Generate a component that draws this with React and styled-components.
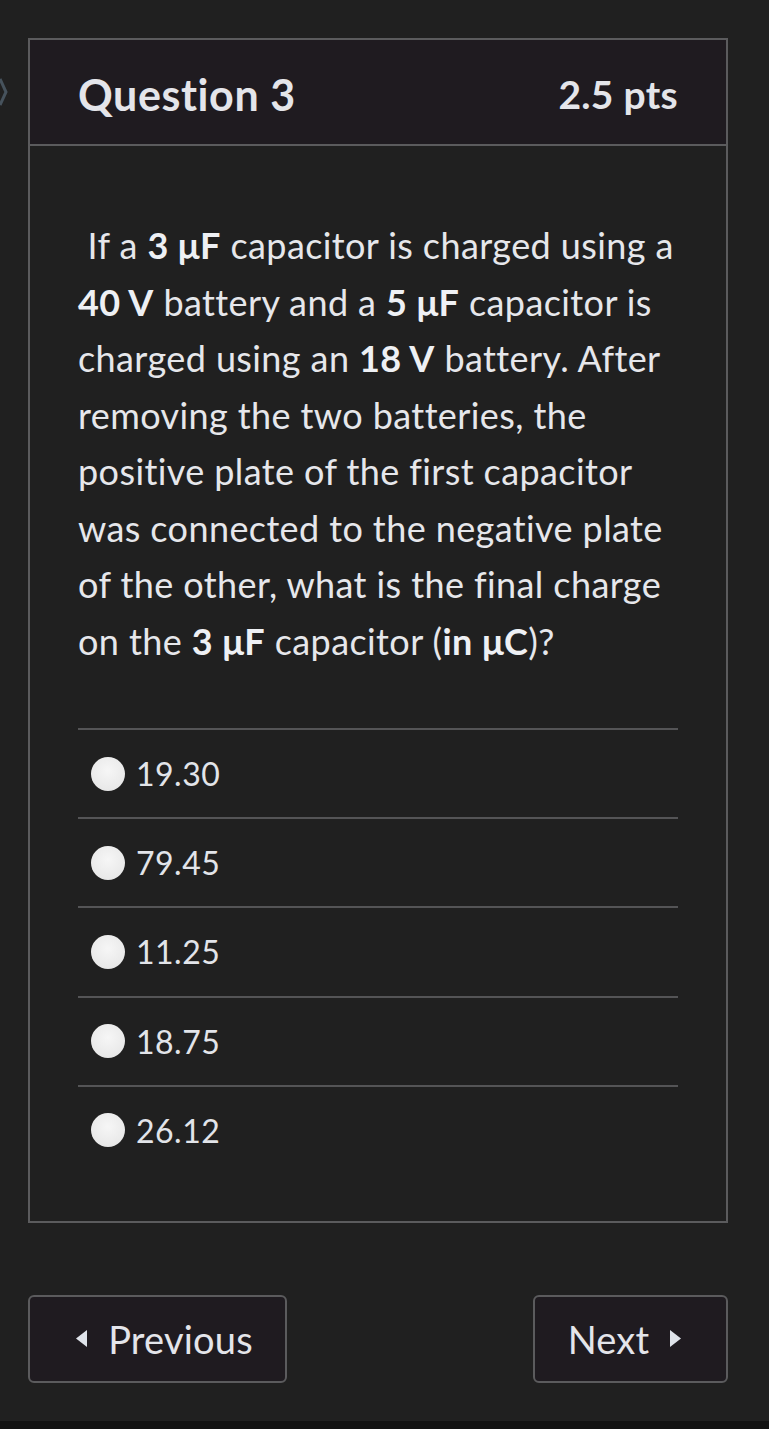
import React from "react";
import styled, { createGlobalStyle } from "styled-components";

const Global = createGlobalStyle`
  html, body { margin: 0; padding: 0; background: #202020; }
  body { font-family: Lato, "Open Sans", sans-serif; color: #e6e7eb; }
`;

const Page = styled.div`
  position: relative;
  min-height: 1429px;
  display: flex;
  flex-direction: column;
  padding-top: 38px;
  box-sizing: border-box;
`;

const EdgeMark = styled.svg`
  position: absolute;
  left: 0;
  top: 78px;
`;

const Card = styled.section`
  margin-left: 28px;
  width: 700px;
  border: 2px solid #5b5b5d;
  box-sizing: border-box;
  background: #202020;
`;

const Header = styled.header`
  height: 106px;
  background: #1f1b20;
  border-bottom: 2px solid #5b5b5d;
  display: flex;
  align-items: center;
  justify-content: space-between;
  padding: 4px 48px 0 48px;
  box-sizing: border-box;
`;

const Title = styled.h2`
  margin: 0;
  font-size: 43px;
  font-weight: 700;
  letter-spacing: 0.6px;
  color: #e4e5ea;
`;

const Points = styled.span`
  font-size: 39px;
  font-weight: 700;
  letter-spacing: 0.3px;
  color: #e4e5ea;
`;

const Body = styled.div`
  padding: 71px 48px 47px 48px;
`;

const Prompt = styled.p`
  margin: 0 0 59px 0;
  font-size: 36px;
  line-height: 56.5px;
  color: #e6e7eb;
  letter-spacing: 0.4px;
  strong { font-weight: 700; color: #eef0f4; }
`;

const Options = styled.ul`
  list-style: none;
  margin: 0;
  padding: 0;
`;

const Option = styled.li`
  height: 89.2px;
  border-top: 2px solid #545456;
  display: flex;
  align-items: center;
  padding-left: 13px;
  box-sizing: border-box;
  gap: 11px;
`;

const Radio = styled.span`
  width: 34px;
  height: 34px;
  border-radius: 50%;
  background: radial-gradient(circle at 50% 40%, #f6f6f6 0%, #e9e9e9 70%, #d5d5d5 100%);
  flex: none;
`;

const Label = styled.span`
  font-size: 32px;
  color: #e2e4e9;
  letter-spacing: 0.5px;
`;

const Nav = styled.nav`
  margin-top: 72px;
  margin-left: 28px;
  width: 700px;
  display: flex;
  justify-content: space-between;
`;

const NavButton = styled.button`
  height: 88px;
  width: ${(p) => p.$w}px;
  background: #1f1b20;
  border: 2px solid #5b5b5d;
  border-radius: 6px;
  color: #e4e5ea;
  font-family: Lato, sans-serif;
  font-size: 38px;
  letter-spacing: 0.2px;
  display: flex;
  align-items: center;
  justify-content: center;
  gap: 21px;
  padding: 0 ${(p) => p.$pr}px 0 ${(p) => p.$pl}px;
  box-sizing: border-box;
`;

const Tri = styled.svg`
  flex: none;
`;

const Footer = styled.div`
  margin-top: auto;
  height: 8px;
  background: #121212;
`;

const options = ["19.30", "79.45", "11.25", "18.75", "26.12"];

export default function App() {
  return (
    <>
      <Global />
      <Page>
        <EdgeMark width="8" height="28" viewBox="0 0 8 28">
          <path d="M0 1 L6 14 L0 27" fill="none" stroke="#46525c" strokeWidth="3" />
        </EdgeMark>
        <Card>
          <Header>
            <Title>Question 3</Title>
            <Points>2.5 pts</Points>
          </Header>
          <Body>
            <Prompt>
              &nbsp;If a <strong>3 μF</strong> capacitor is charged using a{" "}
              <strong>40 V</strong> battery and a <strong>5 μF</strong> capacitor is
              charged using an <strong>18 V</strong> battery. After removing the two
              batteries, the positive plate of the first capacitor was connected to
              the negative plate of the other, what is the final charge on the{" "}
              <strong>3 μF</strong> capacitor (<strong>in μC</strong>)?
            </Prompt>
            <Options>
              {options.map((o) => (
                <Option key={o}>
                  <Radio />
                  <Label>{o}</Label>
                </Option>
              ))}
            </Options>
          </Body>
        </Card>
        <Nav>
          <NavButton $w={259} $pl={14} $pr={0}>
            <Tri width="11" height="17" viewBox="0 0 11 17">
              <path d="M11 0 L0 8.5 L11 17 Z" fill="#dfe3ea" />
            </Tri>
            Previous
          </NavButton>
          <NavButton $w={195} $pl={0} $pr={12}>
            Next
            <Tri width="11" height="17" viewBox="0 0 11 17">
              <path d="M0 0 L11 8.5 L0 17 Z" fill="#dfe3ea" />
            </Tri>
          </NavButton>
        </Nav>
        <Footer />
      </Page>
    </>
  );
}
